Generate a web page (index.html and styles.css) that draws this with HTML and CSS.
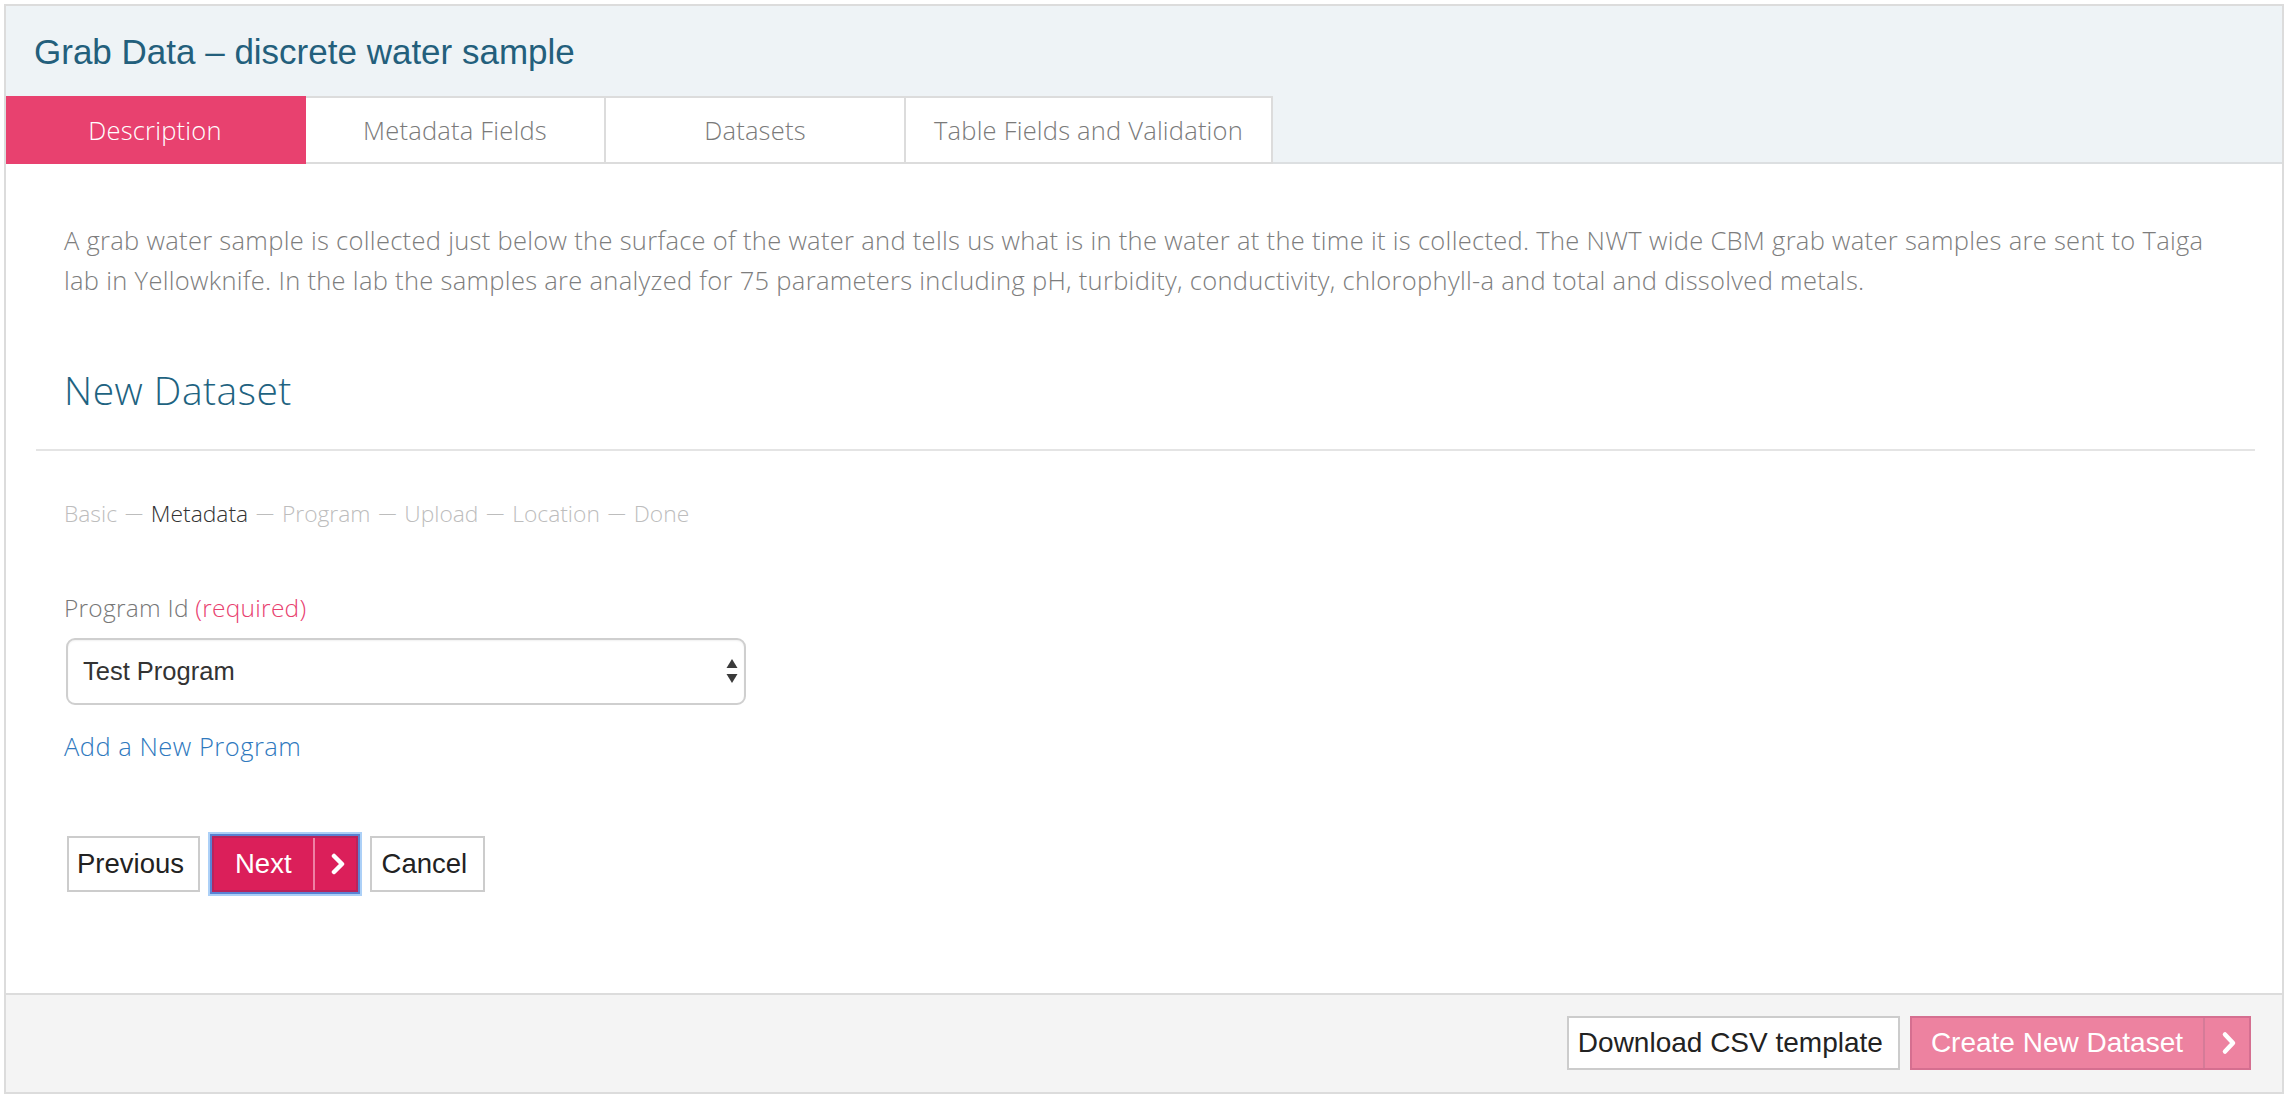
FILE: index.html
```html
<!DOCTYPE html>
<html lang="en">
<head>
<meta charset="utf-8">
<title>Grab Data – discrete water sample</title>
<link rel="stylesheet" href="styles.css">
</head>
<body>
<div class="panel">
  <header class="panel-head">
    <h1 class="title">Grab Data – discrete water sample</h1>
    <nav class="tabs">
      <a class="tab active">Description</a>
      <a class="tab">Metadata Fields</a>
      <a class="tab">Datasets</a>
      <a class="tab">Table Fields and Validation</a>
    </nav>
  </header>
  <main class="panel-body">
    <div class="intro">
      <p class="desc">A grab water sample is collected just below the surface of the water and tells us what is in the water at the time it is collected. The NWT wide CBM grab water samples are sent to Taiga lab in Yellowknife. In the lab the samples are analyzed for 75 parameters including pH, turbidity, conductivity, chlorophyll-a and total and dissolved metals.</p>
      <h2 class="section-title">New Dataset</h2>
    </div>
    <hr class="rule">
    <div class="form">
      <div class="steps">Basic <span class="sep">—</span> <span class="cur">Metadata</span> <span class="sep">—</span> Program <span class="sep">—</span> Upload <span class="sep">—</span> Location <span class="sep">—</span> Done</div>
      <label class="field-label">Program Id <span class="req">(required)</span></label>
      <div class="select">
        <span class="select-value">Test Program</span>
        <svg class="select-arrows" width="12" height="25" viewBox="0 0 12 25"><polygon points="6,0 11.5,9 0.5,9" fill="#3a3a3a"/><polygon points="0.5,15 11.5,15 6,24" fill="#3a3a3a"/></svg>
      </div>
      <a class="add-link">Add a New Program</a>
      <div class="btn-row">
        <button class="btn">Previous</button>
        <button class="btn btn-split btn-next"><span class="btn-label">Next</span><span class="btn-chev"><svg width="16" height="22" viewBox="0 0 16 22"><path d="M4 3 L12 11 L4 19" fill="none" stroke="#fff" stroke-width="4.5" stroke-linecap="round" stroke-linejoin="round"/></svg></span></button>
        <button class="btn btn-cancel">Cancel</button>
      </div>
    </div>
  </main>
  <footer class="panel-foot">
    <button class="btn btn-foot">Download CSV template</button>
    <button class="btn btn-foot btn-split btn-create"><span class="btn-label">Create New Dataset</span><span class="btn-chev"><svg width="16" height="24" viewBox="0 0 16 24"><path d="M4 3.5 L12 12 L4 20.5" fill="none" stroke="#fff" stroke-width="4.5" stroke-linecap="round" stroke-linejoin="round"/></svg></span></button>
  </footer>
</div>
</body>
</html>
```
FILE: styles.css
```css
html, body {
  background: #fff;
}
body {
  margin: 4px;
  font-family: "Open Sans", "Liberation Sans", sans-serif;
}

.panel {
  border: 2px solid #dcdcdc;
  display: flex;
  flex-direction: column;
}

/* header */
.panel-head {
  background: #eef3f6;
  padding-top: 26px;
}
.title {
  margin: 0 0 24px 28px;
  font: 400 35px/40px "Liberation Sans", sans-serif;
  color: #235f7c;
}
.tabs {
  display: flex;
  border-bottom: 2px solid #dcdfe1;
}
.tab {
  box-sizing: border-box;
  min-width: 300px;
  height: 68px;
  margin-bottom: -2px;
  padding: 0 28px;
  border: 2px solid #dcdcdc;
  border-left-width: 0;
  background: #fff;
  font: 300 25.5px/64px "Open Sans", sans-serif;
  letter-spacing: 0.2px;
  color: #7a7a7a;
  text-align: center;
  cursor: pointer;
}
.tab.active {
  background: #e8416f;
  border-color: #e8416f;
  color: #fff;
}

/* body */
.panel-body {
  padding: 56px 27px 101px 30px;
  background: #fff;
}
.intro {
  padding: 0 28px;
}
.desc {
  margin: 0;
  font: 300 25.5px/40px "Open Sans", sans-serif;
  letter-spacing: 0.3px;
  color: #7d7d7d;
}
.section-title {
  margin: 67px 0 0;
  font: 300 39px/46px "Open Sans", sans-serif;
  letter-spacing: 0.5px;
  color: #1e6381;
}
.rule {
  margin: 36px 0 0;
  border: 0;
  height: 2px;
  background: #e4e4e4;
}
.form {
  padding: 48px 28px 0;
}
.steps {
  font: 300 22.8px/30px "Open Sans", sans-serif;
  color: #bdbdbd;
}
.steps .sep {
  display: inline-block;
  margin: 0 2px;
  font-size: 18px;
  line-height: 1;
  vertical-align: 2px;
}
.steps .cur {
  color: #333;
}
.field-label {
  display: block;
  margin-top: 64px;
  font: 300 24.5px/30px "Open Sans", sans-serif;
  letter-spacing: 0.25px;
  color: #777;
}
.req {
  color: #e8416f;
}
.select {
  box-sizing: border-box;
  margin: 15px 0 0 2px;
  width: 680px;
  height: 67px;
  border: 2px solid #cfcfcf;
  border-radius: 9px;
  box-shadow: inset 0 1px 2px rgba(0, 0, 0, 0.06);
  display: flex;
  align-items: center;
  padding: 0 6px 0 15px;
  font: 400 25.5px "Liberation Sans", sans-serif;
  color: #333;
}
.select-arrows {
  margin-left: auto;
}
.add-link {
  display: block;
  margin-top: 25px;
  font: 300 25.5px/32px "Open Sans", sans-serif;
  letter-spacing: 0.5px;
  color: #2f79be;
  cursor: pointer;
}
.btn-row {
  display: flex;
  align-items: center;
  gap: 12px;
  margin-top: 74px;
  padding-left: 3px;
}

/* buttons */
.btn {
  box-sizing: border-box;
  height: 56px;
  padding: 0 14px 0 8px;
  border: 2px solid #cccccc;
  background: #fff;
  font: 400 27.5px/52px "Liberation Sans", sans-serif;
  color: #222;
  border-radius: 0;
  cursor: pointer;
}
.btn-cancel {
  padding: 0 16px 0 10px;
}
.btn-split {
  display: inline-flex;
  padding: 0;
  color: #fff;
}
.btn-split .btn-label {
  padding: 0 21px;
}
.btn-split .btn-chev {
  display: flex;
  align-items: center;
  justify-content: center;
  width: 43px;
  padding-left: 6px;
  box-sizing: border-box;
  border-left: 2px solid #ef80a4;
}
.btn-next {
  background: #db1f5a;
  border-color: #b8245c;
  box-shadow: 0 0 0 2px #5a82d2, 0 0 0 4px #acd0f7;
}

/* footer */
.panel-foot {
  border-top: 2px solid #dcdcdc;
  background: #f4f4f4;
  padding: 21px 31px 22px 28px;
  display: flex;
  justify-content: flex-end;
  gap: 10px;
}
.btn-foot {
  height: 54px;
  line-height: 50px;
  padding: 0 15px 0 9px;
  font-size: 28px;
}
.btn-create {
  padding: 0;
  background: #ed82a0;
  border-color: #d56f90;
  color: #fff;
}
.btn-create .btn-label {
  padding: 0 20px 0 19px;
}
.btn-create .btn-chev {
  width: 46px;
  padding-left: 3px;
  border-left: 2px solid #d57b98;
}
```
